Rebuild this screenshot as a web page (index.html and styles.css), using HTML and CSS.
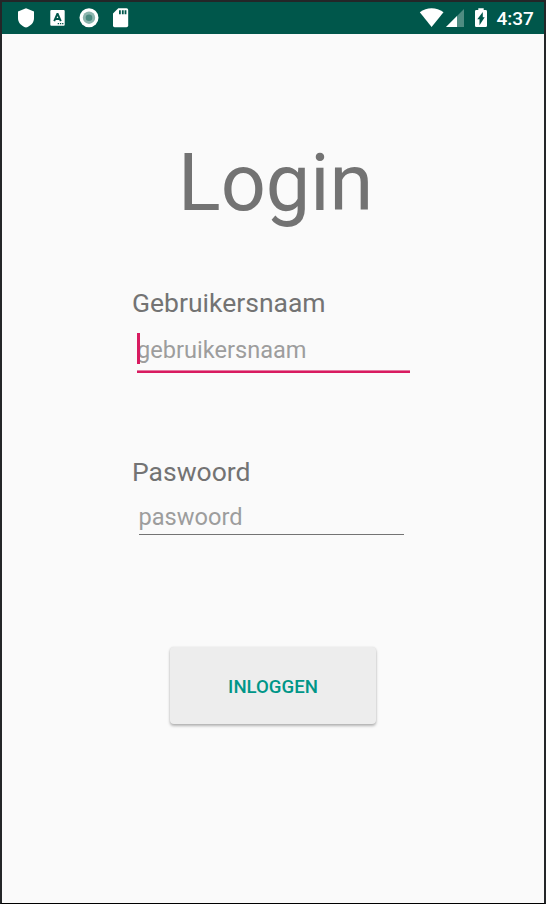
FILE: index.html
```html
<!DOCTYPE html>
<html lang="nl">
<head>
<meta charset="utf-8">
<title>Login</title>
<link rel="stylesheet" href="styles.css">
</head>
<body>
<div class="screen">
  <header class="status">
    <svg class="icons-left" width="140" height="32" viewBox="0 2 140 32">
      <path fill="#fff" d="M26 8.300l8 3.200v6.500c0 4.700-3.200 7.900-8 9.600-4.800-1.700-8-4.900-8-9.600v-6.500z"/>
      <rect x="50.300" y="10" width="14.400" height="15.700" rx="1" fill="#fff"/>
      <path fill="none" stroke="#00574b" stroke-width="1.900" d="M54.200 21.200l3.100-7.200h.4l3.100 7.200M55.300 19h4.400"/>
      <path fill="#00574b" d="M57.700 23h1.300v1.300h-1.300zM59.900 23h1.300v1.300h-1.300zM62.100 23h1.300v1.300h-1.300z"/>
      <circle cx="89" cy="17.700" r="9.500" fill="#fff"/>
      <circle cx="89" cy="17.700" r="6.200" fill="#8cb5ae"/>
      <circle cx="89" cy="17.700" r="3.300" fill="#4c8a80"/>
      <path fill="#fff" d="M118.300 8.300h8.200q1.700 0 1.700 1.700v15.600q0 1.600-1.700 1.600h-11.900q-1.600 0-1.600-1.600v-12z"/>
      <path fill="#00574b" d="M119 10.200h1.800v4h-1.800zM121.900 10.200h1.800v4h-1.800zM124.600 10.200h1.800v4h-1.800z"/>
    </svg>
    <svg class="icons-right" width="84" height="32" viewBox="410 2 84 32">
      <path fill="#fff" d="M419.800 12.300c7-5.500 16.700-5.500 23.700 0l-11.900 14.800z"/>
      <path fill="#4f8c82" d="M464 9v18h-18z"/>
      <path fill="#fff" d="M457 16v11h-11z"/>
      <path fill="#fff" d="M478.300 8.300h5.400v1.800h2q1.300 0 1.300 1.300v14.400q0 1.300-1.300 1.300h-9.400q-1.300 0-1.300-1.300v-14.400q0-1.300 1.300-1.300h2z"/>
      <path fill="#00574b" d="M482.800 12v5.200h1.900l-5.200 8v-5.900h-2.200z"/>
    </svg>
    <span class="clock">4:37</span>
  </header>
  <main class="content">
    <h1 class="title">Login</h1>
    <label class="label" for="user">Gebruikersnaam</label>
    <div class="field field-active">
      <input class="input" id="user" type="text" placeholder="gebruikersnaam">
      <span class="caret"></span>
    </div>
    <label class="label label-pass" for="pass">Paswoord</label>
    <div class="field field-idle">
      <input class="input" id="pass" type="password" placeholder="paswoord">
    </div>
    <button class="submit" type="button">INLOGGEN</button>
  </main>
</div>
</body>
</html>
```
FILE: styles.css
```css
* { box-sizing: border-box; }

body {
  margin: 0;
  background: #fafafa;
  font-family: Roboto, sans-serif;
}

.screen {
  height: 904px;
  overflow: hidden;
  border: 2px solid #242628;
  border-bottom: 1px solid #000;
  background: #fafafa;
}

.status {
  display: flex;
  height: 32px;
  margin-left: -2px;
  background: #00574b;
  border-left: 2px solid #242628;
}

.icons-left { margin-left: -2px; }
.icons-right { margin-left: 270px; }

.clock {
  margin-left: 2.500px;
  color: #fff;
  font-size: 19px;
  font-weight: 500;
  line-height: 33px;
}

.content {
  display: flex;
  flex-direction: column;
  align-items: flex-start;
  padding: 102px 0 0 130px;
  color: #737373;
}

.title {
  margin: 0 0 0 46px;
  font-size: 79.2px;
  font-weight: 400;
  line-height: 94px;
}

.label {
  margin-top: 57px;
  font-size: 26.5px;
  line-height: 32px;
}

.label-pass { margin-top: 83px; }

.field {
  position: relative;
  display: flex;
}

.field-active {
  width: 273px;
  height: 40px;
  margin: 14px 0 0 5px;
  border-bottom: 2px solid #d81b60;
  box-shadow: inset 0 -1px #e57ba2;
}

.field-idle {
  width: 265.800px;
  height: 35px;
  margin: 12px 0 0 6.500px;
  border-bottom: 1px solid #737373;
}

.input {
  width: 100%;
  height: 34px;
  padding: 0;
  border: 0;
  outline: 0;
  background: transparent;
  font: 23.600px/34px Roboto, sans-serif;
}

.input::placeholder {
  color: #9d9d9d;
  opacity: 1;
}

.caret {
  position: absolute;
  top: 0;
  left: 0;
  width: 2.500px;
  height: 31px;
  background: #d81b60;
}

.submit {
  width: 206.800px;
  height: 77px;
  margin: 112px 0 0 37.600px;
  padding: 2px 0 0;
  border: 0;
  border-radius: 4px;
  background: #ededed;
  box-shadow: 0 2px 3px rgba(0, 0, 0, 0.28), 0 0 2px rgba(0, 0, 0, 0.1);
  color: #009688;
  font: 500 18.600px/22px Roboto, sans-serif;
}
```
